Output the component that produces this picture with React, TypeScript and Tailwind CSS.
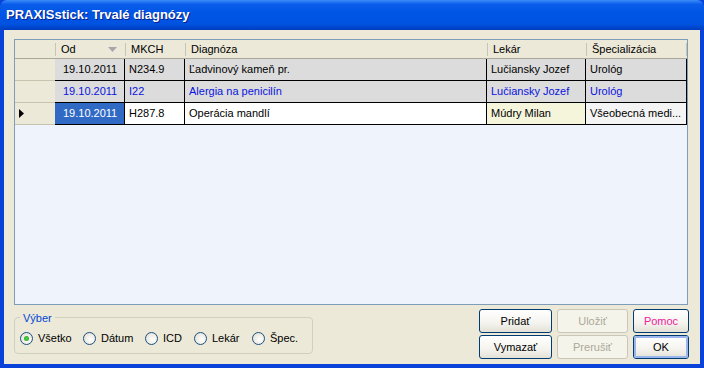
import React from "react";

type Row = {
  od: string;
  mkch: string;
  diag: string;
  lekar: string;
  spec: string;
  current?: boolean;
  blue?: boolean;
};

const rows: Row[] = [
  { od: "19.10.2011", mkch: "N234.9", diag: "Ľadvinový kameň pr.", lekar: "Lučiansky Jozef", spec: "Urológ" },
  { od: "19.10.2011", mkch: "I22", diag: "Alergia na penicilín", lekar: "Lučiansky Jozef", spec: "Urológ", blue: true },
  { od: "19.10.2011", mkch: "H287.8", diag: "Operácia mandlí", lekar: "Múdry Milan", spec: "Všeobecná medi...", current: true },
];

const filters = ["Všetko", "Dátum", "ICD", "Lekár", "Špec."];

function HeaderCell({ w, label, sort }: { w: string; label: string; sort?: boolean }) {
  return (
    <div className={`${w} relative flex h-full items-center pl-[6px] pr-1`}>
      <span className="absolute left-0 top-[3px] h-[13px] w-px bg-[#C7C5B2]" />
      <span>{label}</span>
      {sort && (
        <svg className="ml-auto mr-[4px]" width="9" height="5" viewBox="0 0 9 5">
          <path d="M0 0 H9 L4.5 5 Z" fill="#A7A6AA" />
        </svg>
      )}
    </div>
  );
}

function Radio({ label, checked }: { label: string; checked?: boolean }) {
  return (
    <div className="flex items-center gap-[5px]">
      <span className="flex h-[13px] w-[13px] items-center justify-center rounded-full border border-[#1C5180] bg-[radial-gradient(circle_at_60%_60%,#FFFFFF_0%,#E8E6DC_70%,#D4D0C0_100%)]">
        {checked && <span className="h-[5px] w-[5px] rounded-full bg-[radial-gradient(circle,#55D24A_0%,#21A121_100%)]" />}
      </span>
      <span>{label}</span>
    </div>
  );
}

function Btn({ label, disabled, pink, def, w }: { label: string; disabled?: boolean; pink?: boolean; def?: boolean; w: string }) {
  const border = disabled ? "border-[#C9C7BA]" : "border-[#003C74]";
  const text = disabled ? "text-[#ACA899]" : pink ? "text-[#F0209A]" : "text-black";
  const bg = disabled
    ? "bg-[#F5F4EA]"
    : "bg-[linear-gradient(to_bottom,#FFFFFF_0%,#F4F3EE_60%,#E3E1D6_100%)]";
  return (
    <div className={`${w} flex h-[24px] items-center justify-center rounded-[3px] border ${border} ${bg} ${text}`}>
      <span className={`flex h-full w-full items-center justify-center rounded-[2px] ${def ? "border-2 border-[#9AB6EC]" : ""}`}>{label}</span>
    </div>
  );
}

export default function App() {
  return (
    <div className="flex h-[368px] w-[704px] flex-col bg-[#0842D9] font-['Liberation_Sans',Arial,sans-serif] text-[11px] text-black">
      {/* TITLE BAR */}
      <div className="flex h-[30px] items-center rounded-t-[7px] bg-[linear-gradient(to_bottom,#3C8CF8_0%,#0A5DEA_14%,#0055E5_45%,#0053E1_80%,#003DBE_100%)] pl-[6px]">
        <span className="text-[13px] font-bold text-white [text-shadow:1px_1px_0_#0A1E8A]">PRAXISstick: Trvalé diagnózy</span>
      </div>

      {/* BODY */}
      <div className="mx-[4px] mb-[4px] flex flex-1 flex-col bg-[#ECE9D8] px-[10px] pt-[9px]">
        {/* GRID */}
        <div className="flex h-[266px] w-[674px] flex-col border border-[#7F9DB9] bg-[#EEF3FC]">
          <div className="flex h-[19px] border-b border-[#ACA899] bg-[#ECE9D8]">
            <div className="w-[40px]" />
            <HeaderCell w="w-[70px]" label="Od" sort />
            <HeaderCell w="w-[60px]" label="MKCH" />
            <HeaderCell w="w-[302px]" label="Diagnóza" />
            <HeaderCell w="w-[99px]" label="Lekár" />
            <HeaderCell w="w-[100px]" label="Špecializácia" />
            <span className="mt-[3px] h-[13px] w-px bg-[#C7C5B2]" />
          </div>
          {rows.map((r, i) => {
            const bg = r.current ? "bg-white" : "bg-[#DCDCDC]";
            const col = r.blue ? "text-[#0A14E0]" : "text-black";
            return (
              <div key={i} className={`flex h-[22px] ${col}`}>
                <div className="flex w-[40px] items-center border-b border-[#C7C3AE] bg-[#ECE9D8] pl-[4px]">
                  {r.current && (
                    <svg width="5" height="9" viewBox="0 0 5 9">
                      <path d="M0 0 L5 4.5 L0 9 Z" fill="#000" />
                    </svg>
                  )}
                </div>
                <div className={`flex w-[70px] items-center border-b border-r border-black pl-[8px] ${r.current ? "bg-[#316AC5] text-white" : bg}`}>{r.od}</div>
                <div className={`flex w-[60px] items-center border-b border-r border-black pl-[4px] ${bg}`}>{r.mkch}</div>
                <div className={`flex w-[302px] items-center border-b border-r border-black pl-[4px] ${bg}`}>{r.diag}</div>
                <div className={`flex w-[99px] items-center border-b border-r border-black pl-[4px] ${r.current ? "bg-[#F5F5DC]" : bg}`}>{r.lekar}</div>
                <div className={`flex w-[101px] items-center border-b border-r border-black pl-[4px] ${r.current ? "bg-[#F4F4F4]" : bg}`}>{r.spec}</div>
              </div>
            );
          })}
        </div>

        {/* BOTTOM */}
        <div className="mt-[4px] flex items-start">
          <div className="relative mt-[8px] flex h-[37px] w-[299px] items-center rounded-[4px] border border-[#D0D0BF] pl-[5px] pt-[6px]">
            <span className="absolute -top-[8px] left-[5px] bg-[#ECE9D8] px-[3px] text-[#0046D5]">Výber</span>
            <div className="flex items-center">
              <div className="w-[63px]"><Radio label={filters[0]} checked /></div>
              <div className="w-[62px]"><Radio label={filters[1]} /></div>
              <div className="w-[49px]"><Radio label={filters[2]} /></div>
              <div className="w-[58px]"><Radio label={filters[3]} /></div>
              <div><Radio label={filters[4]} /></div>
            </div>
          </div>
          <div className="ml-auto mr-[1px] grid grid-cols-[73px_71px_56px] gap-x-[5px] gap-y-[2px]">
            <Btn w="w-[73px]" label="Pridať" />
            <Btn w="w-[71px]" label="Uložiť" disabled />
            <Btn w="w-[56px]" label="Pomoc" pink />
            <Btn w="w-[73px]" label="Vymazať" />
            <Btn w="w-[71px]" label="Prerušiť" disabled />
            <Btn w="w-[56px]" label="OK" def />
          </div>
        </div>
      </div>
    </div>
  );
}
